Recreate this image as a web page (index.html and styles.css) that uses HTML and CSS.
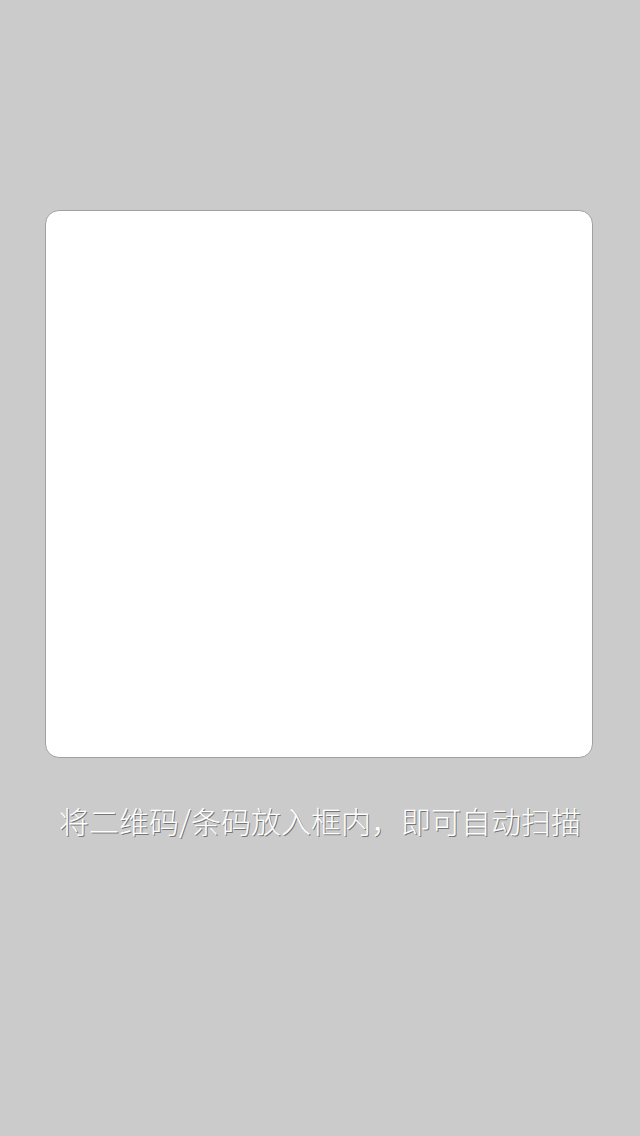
FILE: index.html
```html
<!DOCTYPE html>
<html lang="zh">
<head>
<meta charset="utf-8">
<link rel="stylesheet" href="styles.css">
</head>
<body>
<div class="page">
  <div class="scan-box"></div>
  <p class="hint">将二维码/条码放入框内，即可自动扫描</p>
</div>
</body>
</html>
```
FILE: styles.css
```css
html, body {
  margin: 0;
  padding: 0;
  background: #cbcbcb;
  width: 640px;
  height: 1136px;
  overflow: hidden;
}
.page {
  display: flex;
  flex-direction: column;
  align-items: center;
  padding-top: 210px;
}
.scan-box {
  box-sizing: border-box;
  align-self: flex-start;
  margin-left: 45px;
  width: 548px;
  height: 548px;
  background: #fff;
  border: 1px solid #a0a0a0;
  border-radius: 14px;
}
.hint {
  margin: 41px 0 0;
  font-family: "Noto Sans CJK SC", "Noto Sans", sans-serif;
  font-weight: 300;
  font-size: 30px;
  line-height: 42px;
  color: #fff;
  text-shadow: 1px 1px 0 rgba(60, 60, 60, 0.6);
  white-space: nowrap;
}
```
